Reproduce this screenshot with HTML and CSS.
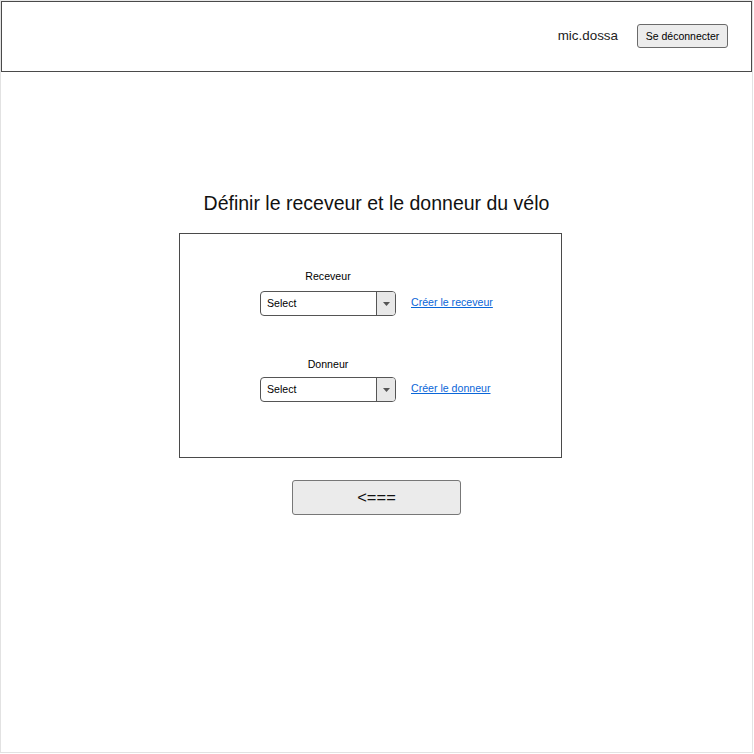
FILE: index.html
```html
<!DOCTYPE html>
<html lang="fr">
<head>
<meta charset="utf-8">
<title>Définir le receveur et le donneur</title>
<link rel="stylesheet" href="styles.css">
</head>
<body>
<div class="frame">
  <header class="header">
    <span class="user">mic.dossa</span>
    <button class="btn-logout">Se déconnecter</button>
  </header>
  <main class="main">
    <h1 class="title">Définir le receveur et le donneur du vélo</h1>
    <section class="card">
      <div class="row">
        <div class="field">
          <label class="label">Receveur</label>
          <div class="select"><span class="select-text">Select</span><span class="select-arrow"><svg width="7" height="4" viewBox="0 0 7 4"><path d="M0 0H7L3.5 4Z" fill="#555"/></svg></span></div>
        </div>
        <a class="link" href="#">Créer le receveur</a>
      </div>
      <div class="row row-2">
        <div class="field">
          <label class="label label-2">Donneur</label>
          <div class="select"><span class="select-text">Select</span><span class="select-arrow"><svg width="7" height="4" viewBox="0 0 7 4"><path d="M0 0H7L3.5 4Z" fill="#555"/></svg></span></div>
        </div>
        <a class="link" href="#">Créer le donneur</a>
      </div>
    </section>
    <button class="btn-back">&lt;===</button>
  </main>
</div>
</body>
</html>
```
FILE: styles.css
```css
* { box-sizing: border-box; }
html, body { margin: 0; padding: 0; background: #fff; }
body { font-family: "Liberation Sans", Arial, sans-serif; color: #000; }
.frame {
  width: 753px;
  height: 753px;
  border: 1px solid #e2e2e2;
  border-top-color: #e9e9e9;
}
.header {
  height: 71px;
  border: 1px solid #4a4a4a;
  display: flex;
  align-items: center;
  justify-content: flex-end;
  padding-right: 23px;
}
.user {
  font-size: 13.4px;
  color: #222;
  margin-right: 19px;
  margin-top: -3px;
}
.btn-logout {
  width: 91px;
  height: 24px;
  font-family: inherit;
  font-size: 10.5px;
  color: #000;
  background: #ececec;
  border: 1px solid #6a6a6a;
  border-radius: 3px;
  padding: 0;
  margin-top: -1px;
}
.main {
  display: flex;
  flex-direction: column;
  align-items: center;
}
.title {
  font-weight: normal;
  font-size: 19.5px;
  line-height: 24px;
  margin: 119px 0 18px;
  color: #111;
}
.card {
  width: 383px;
  height: 225px;
  border: 1px solid #4a4a4a;
  padding: 35px 0 0 80px;
  margin-left: -12px;
}
.row {
  display: flex;
  align-items: flex-end;
}
.row-2 { margin-top: 41px; }
.field {
  display: flex;
  flex-direction: column;
  align-items: center;
  width: 136px;
}
.label {
  font-size: 10.6px;
  line-height: 14px;
  margin-bottom: 8px;
}
.label-2 { margin-bottom: 6px; }
.select {
  width: 136px;
  height: 25px;
  border: 1px solid #555;
  border-radius: 4px;
  display: flex;
  overflow: hidden;
}
.select-text {
  flex: 1;
  font-size: 10.6px;
  line-height: 22px;
  padding-left: 6px;
}
.select-arrow {
  width: 19px;
  border-left: 1px solid #555;
  background: #e8e8e8;
  display: flex;
  align-items: center;
  justify-content: center;
}
.link {
  font-size: 10.6px;
  color: #0a66d8;
  text-decoration: underline;
  margin-left: 15px;
  line-height: 14px;
  margin-bottom: 7px;
}
.btn-back {
  width: 169px;
  height: 35px;
  margin-top: 22px;
  font-family: inherit;
  font-size: 16.5px;
  color: #111;
  background: #ebebeb;
  border: 1px solid #777;
  border-radius: 3px;
  padding: 0;
}
```
